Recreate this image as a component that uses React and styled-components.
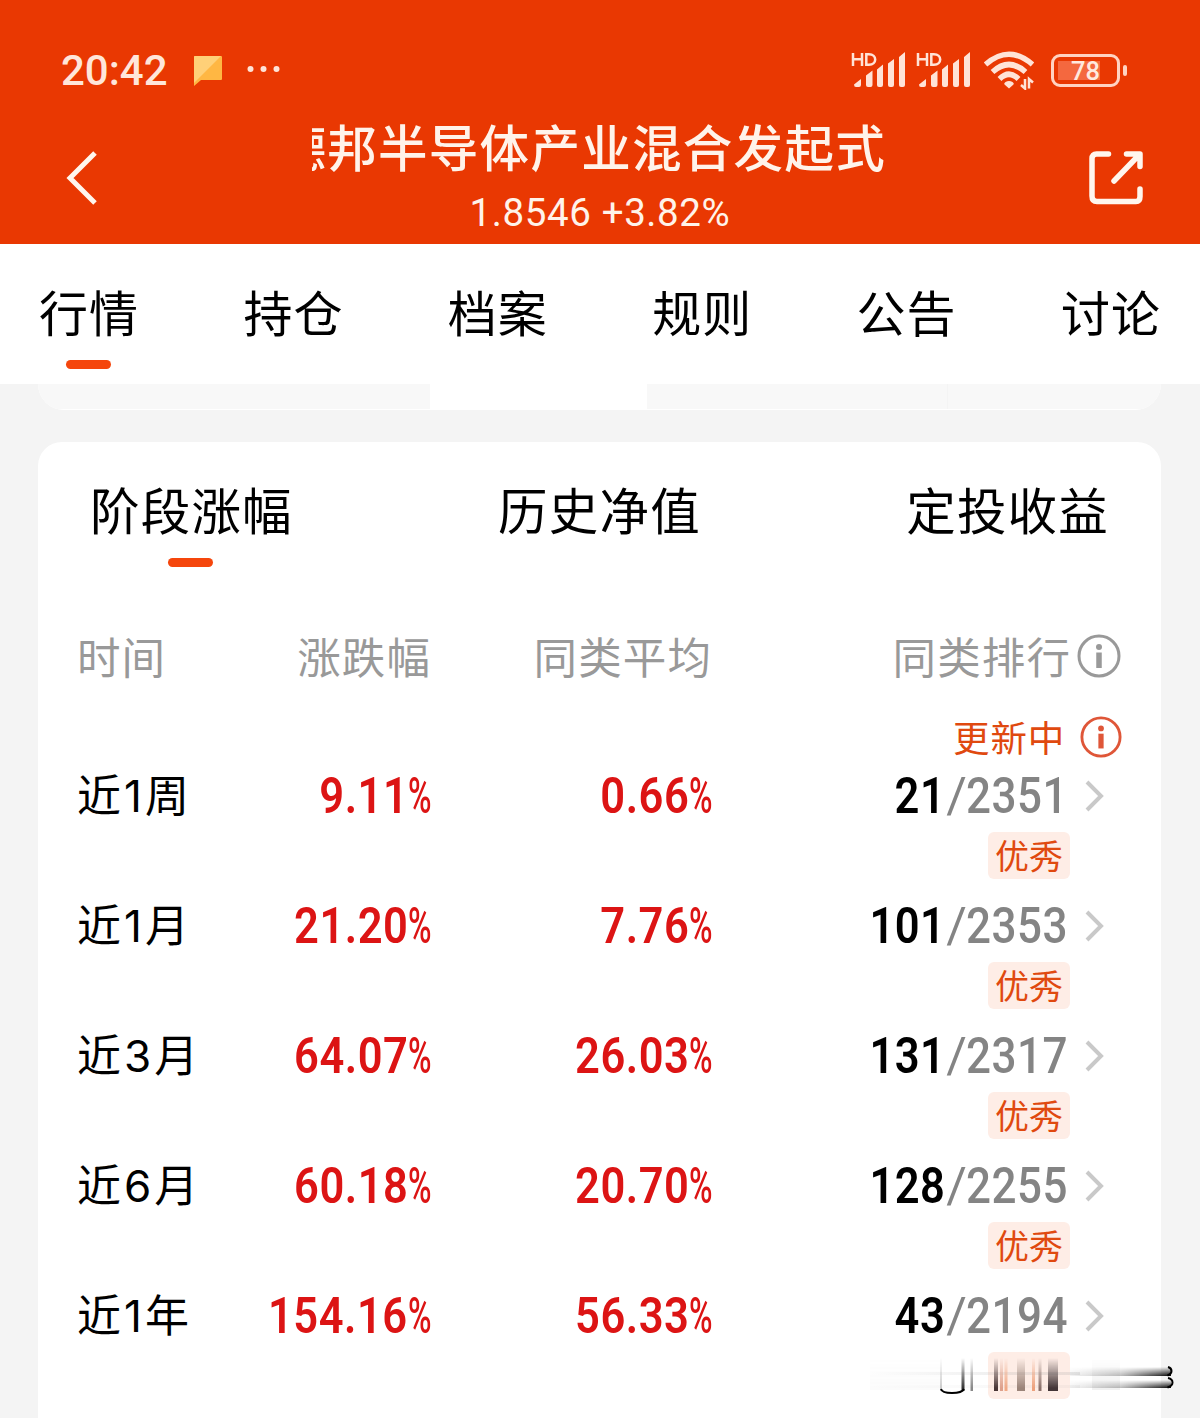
import React from "react";
import styled, { createGlobalStyle } from "styled-components";

const Global = createGlobalStyle`
  * { box-sizing: border-box; }
  body { margin: 0; background: #f4f4f4; }
  svg { display: block; flex: none; }
`;

const Screen = styled.div`
  position: relative;
  width: 1200px;
  height: 1418px;
  overflow: hidden;
  display: flex;
  flex-direction: column;
  background: #f4f4f4;
  color: #000;
  font-family: "Noto Sans CJK SC", sans-serif;
  white-space: nowrap;
`;

const Header = styled.header`
  height: 244px;
  flex: none;
  background: #e93802;
  color: #fff3ea;
`;

const StatusBar = styled.div`
  height: 120px;
  padding: 20px 73px 0 61px;
  display: flex;
  justify-content: space-between;
  align-items: center;
`;

const StatusGroup = styled.div`
  display: flex;
  align-items: center;
  gap: ${(p) => p.$gap}px;
`;

const Clock = styled.span`
  width: 106px;
  font: 500 42px/50px Roboto, sans-serif;
  padding-top: 2px;
  color: #ffe6da;
`;

const TitleRow = styled.div`
  height: 124px;
  display: grid;
  grid-template-columns: 312px 1fr 312px;
`;

const HeaderSide = styled.div`
  display: flex;
  padding: ${(p) => p.$pad};
  justify-content: ${(p) => p.$justify};
`;

const TitleBlock = styled.div`
  display: flex;
  flex-direction: column;
  align-items: center;
`;

const Marquee = styled.div`
  width: 576px;
  height: 60px;
  padding-right: 2px;
  overflow: hidden;
  display: flex;
  justify-content: flex-end;
  font-size: 49.5px;
  font-weight: 500;
  line-height: 51px;
  letter-spacing: 1.3px;
`;

const Quote = styled.div`
  font: 400 38.5px/66px Roboto, sans-serif;
  letter-spacing: 0.6px;
`;

const NavTabs = styled.nav`
  height: 140px;
  flex: none;
  padding: 0 39px 0 39px;
  display: flex;
  justify-content: space-between;
  background: #fff;
`;

const Tab = styled.div`
  display: flex;
  flex-direction: column;
  align-items: center;
  padding-top: ${(p) => p.$top}px;
  font-size: ${(p) => p.$size}px;
  line-height: 60px;
  letter-spacing: ${(p) => p.$track}px;

  &::after {
    content: "";
    width: 45px;
    height: 9px;
    margin-top: ${(p) => p.$gap}px;
    margin-right: 1px;
    border-radius: 5px;
    background: ${(p) => (p.$active ? "#f5460c" : "transparent")};
  }
`;

const PeekCard = styled.div`
  width: 1123px;
  height: 26px;
  flex: none;
  margin: 0 auto 32px 38px;
  display: grid;
  grid-template-columns: 392px 217px 301px 1fr;
  border-radius: 0 0 26px 26px;
  overflow: hidden;
  background: #fff;
`;

const PeekCell = styled.div`
  height: ${(p) => (p.$on ? 26 : 25)}px;
  background: ${(p) => (p.$on ? "#fff" : "#f8f8f8")};
  border-right: ${(p) => (p.$line ? "1px solid #f4f4f4" : "0")};
`;

const Card = styled.section`
  width: 1123px;
  flex: 1;
  margin-left: 38px;
  border-radius: 24px 24px 0 0;
  background: #fff;
`;

const CardTabs = styled.div`
  height: 179px;
  padding: 0 52px;
  display: flex;
  justify-content: space-between;
`;

const Grid = styled.div`
  display: grid;
  grid-template-columns: 161px 193px 281px 359px 1fr;
  align-items: center;
  padding-left: 39px;
  height: ${(p) => p.$h}px;
`;

const Label = styled.span`
  font-size: 43.5px;
  line-height: 60px;
  letter-spacing: 1.1px;
  color: #999;
  text-align: ${(p) => p.$align || "left"};
`;

const Notice = styled.div`
  height: 45px;
  margin-top: 23px;
  padding-right: 39px;
  display: flex;
  justify-content: flex-end;
  align-items: center;
  gap: 15px;
  font-size: 36.5px;
  line-height: 44px;
  letter-spacing: 0.8px;
  color: #e0490f;
`;

const Rows = styled.div`
  padding-top: 1px;
`;

const Entry = styled.div`
  height: 130px;
`;

const Period = styled.span`
  font-family: Inter, "Noto Sans CJK SC", sans-serif;
  font-size: 44px;
  line-height: 60px;
  letter-spacing: 3px;
`;

const Amount = styled.span`
  display: flex;
  justify-content: flex-end;
  font: 600 50px/60px Roboto, sans-serif;
  color: #dc1414;
`;

const Digits = styled.span`
  transform: scaleX(${(p) => p.$scale});
  transform-origin: right;
  letter-spacing: 0.6px;
`;

const Percent = styled.span`
  width: 23px;
  font-weight: 500;
  transform: scaleX(0.64);
  transform-origin: left;
`;

const Rank = styled.span`
  display: flex;
  justify-content: flex-end;
  padding-right: 3px;
  font: 600 50px/60px Roboto, sans-serif;
`;

const Slash = styled.span`
  width: 23px;
  text-align: center;
  font-weight: 400;
  color: #848484;
`;

const Total = styled.span`
  width: 100px;
  display: flex;
  justify-content: flex-end;
  font-weight: 500;
  color: #848484;
`;

const TagLine = styled.div`
  display: flex;
  justify-content: flex-end;
  padding-right: 91px;
`;

const Tag = styled.span`
  width: 82px;
  height: 47px;
  border-radius: 6px;
  background: #feede6;
  color: #e0490f;
  text-align: center;
  font-size: 34px;
  line-height: 46px;
`;

const Smear = styled.svg`
  position: absolute;
  left: 850px;
  top: 1350px;
`;

const Signal = () => (
  <svg width="56" height="40" viewBox="0 0 56 40">
    <g stroke="#ffe3d7" strokeWidth="2.5" fill="none">
      <path d="M2 3v13M11 3v13M2 9.300h9M15.300 4.200V14.800h2.600c8.400 0 8.400-10.600 0-10.600z" />
    </g>
    <g fill="#ffe3d7" transform="translate(-1 1)">
      <path d="M4 33.500l7-5.500v6q0 2-2 2H6q-2 0-2-2.500zM16 24.500l6.500-5v14.500q0 2-2 2h-2.500q-2 0-2-2zM27 18.500l6-5v20.500q0 2-2 2h-2q-2 0-2-2zM38 12.500l6-4.500v26q0 2-2 2h-2q-2 0-2-2zM49 6l6-5v33q0 2-2 2h-2q-2 0-2-2z" />
    </g>
  </svg>
);

const Wifi = () => (
  <svg width="50" height="40" viewBox="0 0 50 40">
    <g fill="none" stroke="#ffe3d7" strokeWidth="5.500">
      <path d="M1.500 14.500Q25-6 48.500 14.500" />
      <path d="M8.500 22Q25 7 41.500 22" />
      <path d="M15.500 29Q25 19.500 34.500 29" />
    </g>
    <path d="M25 38.500l-4.500-4q-1-1.500 1-2.500 3.500-2 7 0 2 1 1 2.500z" fill="#ffe3d7" />
    <path d="M41 29v9.500l-4-3.500M45 38.500V29l4 3.500" fill="none" stroke="#ffe3d7" strokeWidth="2.500" />
  </svg>
);

const BatteryShell = styled.div`
  display: flex;
  align-items: center;
  gap: 3px;

  &::after {
    content: "";
    width: 4px;
    height: 11px;
    border-radius: 2px;
    background: #ffd3c2;
  }
`;

const BatteryBody = styled.div`
  width: 69px;
  height: 33px;
  border: 3px solid #ffd3c2;
  border-radius: 9px;
  background: linear-gradient(#f4683f, #f4683f) 4px 4px / 42px 19px no-repeat;
  color: #ffe9df;
  text-align: center;
  font: 500 25.5px/28px Roboto, sans-serif;
`;

const Info = ({ size, color, width }) => (
  <svg width={size} height={size} viewBox="0 0 44 44">
    <circle cx="22" cy="22" r="20" fill="none" stroke={color} strokeWidth={width} />
    <circle cx="22" cy="13" r="3" fill={color} />
    <path d="M22 18.500v15.500" stroke={color} strokeWidth="5.500" />
  </svg>
);

const InfoSlot = styled.span`
  padding-left: 6px;
`;

const ChevronSlot = styled.span`
  padding-left: 14px;
`;

const rows = [
  ["近1周", "9.11", "0.66", "21", "2351"],
  ["近1月", "21.20", "7.76", "101", "2353"],
  ["近3月", "64.07", "26.03", "131", "2317"],
  ["近6月", "60.18", "20.70", "128", "2255"],
  ["近1年", "154.16", "56.33", "43", "2194"],
];

const Value = ({ children }) => (
  <Amount>
    <Digits $scale={0.87}>{children}</Digits>
    <Percent>%</Percent>
  </Amount>
);

const streaks = [
  [90.5, 1, "#999"], [111.5, 3, "#333"], [120.5, 2.5, "#888"],
  [144, 4, "#493636"], [150, 3, "#dda08b"], [154.5, 3, "#efa986"],
  [167, 8, "#9b8479"], [182, 3, "#eda17c"], [188.5, 3, "#89706a"],
  [198, 10, "#443638"],
];

export default function App() {
  return (
    <Screen>
      <Global />
      <Header>
        <StatusBar>
          <StatusGroup $gap={27}>
            <Clock>20:42</Clock>
            <StatusGroup $gap={25}>
              <svg width="28" height="32" viewBox="0 0 28 32">
                <path d="M1 2h26q1 0 1 1v22q0 1-1 1H7l-7 6V3q0-1 1-1z" fill="#ffb743" />
                <path d="M1 2h26L0 29V3q0-1 1-1z" fill="#ffd078" />
              </svg>
              <svg width="34" height="10" viewBox="0 0 34 10">
                <g fill="#ffe3d7">
                  <circle cx="3.500" cy="4" r="3" />
                  <circle cx="16.500" cy="4" r="3" />
                  <circle cx="29.500" cy="4" r="3" />
                </g>
              </svg>
            </StatusGroup>
          </StatusGroup>
          <StatusGroup $gap={12}>
            <StatusGroup $gap={9}>
              <Signal />
              <Signal />
            </StatusGroup>
            <StatusGroup $gap={17}>
              <Wifi />
              <BatteryShell>
                <BatteryBody>78</BatteryBody>
              </BatteryShell>
            </StatusGroup>
          </StatusGroup>
        </StatusBar>
        <TitleRow>
          <HeaderSide $pad="30px 0 0 65px" $justify="flex-start">
            <svg width="34" height="56" viewBox="0 0 34 56">
              <path d="M30 3L5 28l25 25" fill="none" stroke="#fff6ed" strokeWidth="5" />
            </svg>
          </HeaderSide>
          <TitleBlock>
            <Marquee>德邦半导体产业混合发起式</Marquee>
            <Quote>1.8546 +3.82%</Quote>
          </TitleBlock>
          <HeaderSide $pad="29px 56px 0 0" $justify="flex-end">
            <svg width="56" height="56" viewBox="0 0 56 56">
              <g fill="none" stroke="#fff6ed" strokeWidth="5.500" strokeLinecap="round" strokeLinejoin="round">
                <path d="M20.500 5H8.500Q4 5 4 9.500V47q0 5.500 5 5.500h39q4 0 4-5V40" />
                <path d="M38.500 5H52v12.500M51 6L26 32" />
              </g>
            </svg>
          </HeaderSide>
        </TitleRow>
      </Header>
      <NavTabs>
        {["行情", "持仓", "档案", "规则", "公告", "讨论"].map((t, i) => (
          <Tab key={t} $top={37} $gap={19} $size={49} $track={1} $active={i === 0}>
            {t}
          </Tab>
        ))}
      </NavTabs>
      <PeekCard>
        <PeekCell />
        <PeekCell $on />
        <PeekCell $line />
        <PeekCell />
      </PeekCard>
      <Card>
        <CardTabs>
          {["阶段涨幅", "历史净值", "定投收益"].map((t, i) => (
            <Tab key={t} $top={37} $gap={19} $size={49.5} $track={1.2} $active={i === 0}>
              {t}
            </Tab>
          ))}
        </CardTabs>
        <Grid $h={70}>
          <Label>时间</Label>
          <Label $align="right">涨跌幅</Label>
          <Label $align="right">同类平均</Label>
          <Label $align="right">同类排行</Label>
          <InfoSlot>
            <Info size={44} color="#999" width={3} />
          </InfoSlot>
        </Grid>
        <Notice>
          更新中
          <Info size={42} color="#df5638" width={3} />
        </Notice>
        <Rows>
          {rows.map(([period, change, average, rank, total], i) => (
            <Entry key={period}>
              <Grid $h={72}>
                <Period>{period}</Period>
                <Value>{change}</Value>
                <Value>{average}</Value>
                <Rank>
                  <Digits $scale={0.87}>{rank}</Digits>
                  <Slash>/</Slash>
                  <Total>
                    <Digits $scale={0.88}>{total}</Digits>
                  </Total>
                </Rank>
                <ChevronSlot>
                  <svg width="20" height="32" viewBox="0 0 20 32">
                    <path d="M2 2l14 14L2 30" fill="none" stroke="#c9c9c9" strokeWidth="4" />
                  </svg>
                </ChevronSlot>
              </Grid>
              <TagLine>
                <Tag>{i === 4 ? "" : "优秀"}</Tag>
              </TagLine>
            </Entry>
          ))}
        </Rows>
      </Card>
      <Smear width="350" height="60" viewBox="0 0 350 60">
        <defs>
          <linearGradient id="fall" x1="0" y1="0" x2="0" y2="1">
            <stop offset="0" stopColor="#fff" stopOpacity="0" />
            <stop offset="1" stopColor="#fff" />
          </linearGradient>
          <mask id="fade" maskContentUnits="userSpaceOnUse" maskUnits="userSpaceOnUse" x="0" y="0" width="350" height="60">
            <rect x="0" y="8" width="350" height="30" fill="url(#fall)" />
            <rect x="0" y="38" width="350" height="3" fill="#fff" />
          </mask>
          <linearGradient id="left" x1="0" x2="1">
            <stop offset="0" stopColor="#999" stopOpacity="0" />
            <stop offset="0.7" stopColor="#999" stopOpacity="0.18" />
            <stop offset="1" stopColor="#999" stopOpacity="0.2" />
          </linearGradient>
          <linearGradient id="right" x1="0" x2="1">
            <stop offset="0" stopColor="#222" stopOpacity="0.05" />
            <stop offset="0.5" stopColor="#222" stopOpacity="0.3" />
            <stop offset="1" stopColor="#000" />
          </linearGradient>
          <mask id="bars" maskContentUnits="userSpaceOnUse" maskUnits="userSpaceOnUse" x="0" y="0" width="350" height="60">
            <rect x="220" y="17" width="110" height="9" fill="url(#fall)" />
            <rect x="220" y="30" width="110" height="8" fill="url(#fall)" />
          </mask>
        </defs>
        <rect x="20" y="22" width="210" height="3" fill="url(#left)" />
        <rect x="20" y="35" width="210" height="3" fill="url(#left)" opacity="0.4" />
        <g mask="url(#fade)">
          <rect x="20" y="10" width="70" height="30" fill="#888" opacity="0.03" />
          <rect x="242" y="10" width="28" height="30" fill="#888" opacity="0.12" />
          {streaks.map(([x, w, c]) => (
            <rect key={x} x={x} y="8" width={w} height="33" fill={c} />
          ))}
        </g>
        <path d="M91 39q1 4 11 4t12-4" fill="none" stroke="#000" strokeWidth="2" />
        <g mask="url(#bars)">
          <rect x="220" y="16" width="101" height="22" fill="url(#right)" />
        </g>
        <path d="M318 17q3.500 1 3.500 4t-4 4.500M318 28q4.500 1 4.500 4.500t-5 5" fill="none" stroke="#000" strokeWidth="2" />
      </Smear>
    </Screen>
  );
}
